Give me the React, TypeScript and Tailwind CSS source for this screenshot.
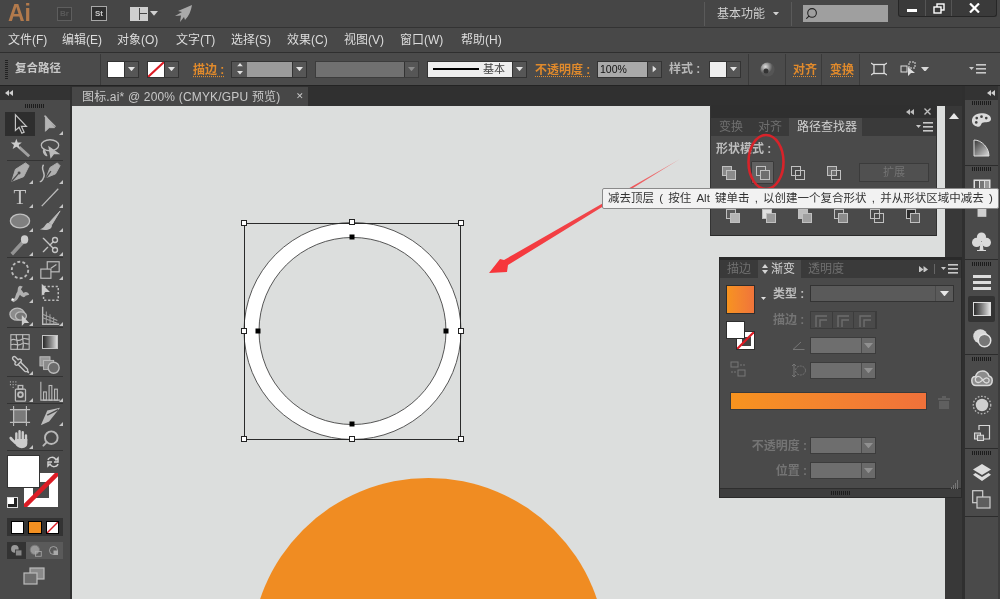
import React from "react";
import { Scissors, Search, Pipette } from "lucide-react";

const CJK = "font-['Liberation_Sans','Noto_Sans_CJK_SC',sans-serif]";
const GRIP = "bg-[repeating-linear-gradient(90deg,#1c1c1c_0_1px,transparent_1px_2px)]";

function Svg({ w = 22, h = 22, vb = "0 0 24 24", children, className = "" }: { w?: number; h?: number; vb?: string; children: React.ReactNode; className?: string }) {
  return (
    <svg width={w} height={h} viewBox={vb} fill="none" stroke="#bcbcbc" strokeWidth={1.4} className={className}>
      {children}
    </svg>
  );
}

const Caret = ({ c = "#e0e0e0", s = 8 }: { c?: string; s?: number }) => (
  <svg width={s} height={s * 0.6} viewBox="0 0 10 6"><path d="M0 0H10L5 6Z" fill={c} /></svg>
);

const Double = ({ right = false, c = "#cfcfcf", s = 8 }: { right?: boolean; c?: string; s?: number }) => (
  <svg width={s} height={(s * 6) / 8} viewBox="0 0 8 6" fill={c} className={right ? "-scale-x-100" : ""}><path d="M4 0V6L0 3Z" /><path d="M8 0V6L4 3Z" /></svg>
);

const MenuLines = () => (
  <svg width="17" height="10" viewBox="0 0 17 10" fill="#c8c8c8"><path d="M0 3H5L2.5 6Z" /><rect x="7" y="0" width="10" height="1.6" /><rect x="7" y="4" width="10" height="1.6" /><rect x="7" y="8" width="10" height="1.6" /></svg>
);

function Slash() {
  return <svg className="absolute inset-0 w-full h-full" viewBox="0 0 20 20" preserveAspectRatio="none"><path d="M0 20L20 0" stroke="#dd1c25" strokeWidth="2.6" /></svg>;
}

/* ------- toolbar icons ------- */
const tools: Record<string, React.ReactNode> = {
  select: <Svg><path d="M7 2V19L11 15.5L14 22L16.5 21L13.5 14.5H19Z" fill="#2c2c2c" stroke="#c4c4c4" strokeWidth="1.3" /></Svg>,
  direct: <Svg><path d="M7 3V20L11 16L17 16Z" fill="#b4b4b4" stroke="#b4b4b4" strokeWidth="1" /><path d="M6 3L18 15" stroke="#b4b4b4" /></Svg>,
  wand: <Svg><path d="M11 11L22 21" strokeWidth="3.2" stroke="#a0a0a0" /><path d="M8 2L9.5 6L14 6L10.6 8.8L12 13L8 10.6L4 13L5.4 8.8L2 6L6.5 6Z" fill="#cccccc" stroke="none" /></Svg>,
  lasso: <Svg><ellipse cx="12" cy="9" rx="9.5" ry="6" /><path d="M6 13C3 16 7 21 9 20M11 11L13 22L16 18L21 18Z" fill="#bcbcbc" /></Svg>,
  pen: <Svg><path d="M22 4L18 1L7 8L3 21L16 16Z" fill="#aeaeae" stroke="#aeaeae" strokeWidth="1" /><path d="M3 21L10 13" stroke="#4a4a4a" /><circle cx="11" cy="12" r="1.6" fill="#4a4a4a" stroke="none" /></Svg>,
  curve: <Svg><path d="M23 4L20 1L12 6L8 17L18 13Z" fill="#aeaeae" stroke="#aeaeae" strokeWidth="1" /><path d="M8 17L13 10" stroke="#4a4a4a" /><path d="M5 3C1 8 8 12 5 17C4 20 2 22 1 21" strokeWidth="1.6" /></Svg>,
  type: <span className="font-['Liberation_Serif',serif] text-[21px] leading-none text-[#c4c4c4]">T</span>,
  line: <Svg><path d="M3 22L21 3" strokeWidth="1.4" stroke="#bcbcbc" /></Svg>,
  ellipse: <Svg><ellipse cx="12" cy="12" rx="10.5" ry="7.5" fill="#808080" stroke="#c0c0c0" /></Svg>,
  brush: <Svg><path d="M23 1L11 14L14 16Z" fill="#bcbcbc" stroke="#bcbcbc" strokeWidth="1" /><path d="M10 14C6 15 8 19 1 21C8 23 15 21 14 16Z" fill="#bcbcbc" stroke="none" /></Svg>,
  blob: <Svg><path d="M15 9L5 20L3 22" strokeWidth="4" stroke="#949494" /><ellipse cx="17" cy="6" rx="4" ry="4.6" fill="#cccccc" stroke="none" /></Svg>,
  scissors: <Scissors size={20} color="#c4c4c4" strokeWidth={1.6} className="-scale-x-100" />,
  rotate: <Svg><circle cx="12" cy="12" r="9" strokeDasharray="3.2 2.4" strokeWidth="2" /></Svg>,
  scale: <Svg><rect x="9" y="3" width="13" height="11" strokeWidth="1.3" /><rect x="2" y="11" width="11" height="10" strokeWidth="1.3" fill="#4a4a4a" /><path d="M13 10L19 6" strokeWidth="1.3" /></Svg>,
  warp: <Svg><path d="M2 20C8 19 6 15 9 11C10 8 9 5 12 4L15 5L13 8L16 12C18 10 21 11 22 14L18 15C17 18 13 16 12 14C10 17 10 20 5 22Z" fill="#b0b0b0" stroke="none" /><circle cx="4" cy="19" r="1.3" fill="#fff" stroke="none" /></Svg>,
  free: <Svg><rect x="5" y="5" width="16" height="15" strokeDasharray="2.4 2" strokeWidth="1.6" /><path d="M3 2V15L7 11L12 11Z" fill="#cccccc" stroke="none" /></Svg>,
  builder: <Svg><ellipse cx="9" cy="10" rx="8" ry="6.5" fill="#8c8c8c" /><ellipse cx="13" cy="12" rx="6" ry="4.6" fill="#777" /><path d="M14 11V23L17 19.5L22 19.5Z" fill="#cccccc" stroke="none" /></Svg>,
  persp: <Svg><path d="M4 2V21H22" strokeWidth="1.5" /><path d="M8 7V21M12 10V21M16 13V21M4 10L20 17M4 14L20 20" strokeWidth="1.1" stroke="#a0a0a0" /></Svg>,
  mesh: <Svg><rect x="2" y="4" width="20" height="16" strokeWidth="1.2" /><path d="M2 10C7 7 9 13 14 9C17 7 19 9 22 9M2 15C7 13 10 17 14 14C17 12 20 15 22 14M8 4C7 9 11 12 9 20M15 4C14 9 17 14 15 20" strokeWidth="1.3" /></Svg>,
  gradient: <div className="w-[16px] h-[14px] border border-[#c4c4c4] bg-gradient-to-r from-[#2a2a2a] to-[#dddddd]" />,
  drop: <Pipette size={19} color="#c4c4c4" strokeWidth={1.8} className="-scale-x-100" />,
  blend: <Svg><rect x="1" y="3" width="11" height="10" fill="#999" strokeWidth="1" /><rect x="5" y="7" width="11" height="10" fill="#8a8a8a" strokeWidth="1" /><circle cx="16" cy="15" r="6" fill="#6c6c6c" strokeWidth="1.5" /></Svg>,
  spray: <Svg><rect x="7" y="10" width="11" height="13" rx="1" /><rect x="10" y="6" width="5" height="4" /><circle cx="12.5" cy="16" r="2.6" strokeWidth="2" /><path d="M1 2H2M4 2H5M7 2H8M1 5H2M4 5H5M7 5H8M4 8H5" strokeWidth="1.5" /></Svg>,
  chart: <Svg><path d="M2 2V22H23" strokeWidth="1.2" /><rect x="5" y="13" width="3" height="9" strokeWidth="1.2" /><rect x="11" y="6" width="3" height="16" strokeWidth="1.2" /><rect x="17" y="10" width="3" height="12" strokeWidth="1.2" /></Svg>,
  artboard: <Svg><rect x="5" y="5" width="14" height="14" fill="#7a7a7a" strokeWidth="1.2" /><path d="M1 5H23M1 19H23M5 1V23M19 1V23" strokeWidth="1.2" /></Svg>,
  slice: <Svg><path d="M23 3L9 6L2 22L11 18Z" fill="#bcbcbc" stroke="none" /><path d="M9 11L21 5" stroke="#4a4a4a" strokeWidth="1.5" /></Svg>,
  hand: (
    <Svg w={22} h={22}>
      <path d="M7 16C5 14 3 13 2 11" stroke="#cccccc" strokeWidth="3" strokeLinecap="round" />
      <path d="M8 14V6M11.5 13V3.5M15 13V4.5M18.5 14V8" stroke="#cccccc" strokeWidth="2.6" strokeLinecap="round" />
      <path d="M6.5 12H20V17C20 20 18 22 14 22C10 22 8 20 6.5 17Z" fill="#cccccc" stroke="none" />
    </Svg>
  ),
  zoom: <Search size={19} color="#b8b8b8" strokeWidth={2.4} className="-scale-x-100" />,
};

function Tool({ k, tri = true, active = false, h = "h-[24px]" }: { k: string; tri?: boolean; active?: boolean; h?: string }) {
  return (
    <div className={`relative w-[30px] ${h} flex items-center justify-center ${active ? "bg-[#2e2e2e]" : ""}`}>
      {tools[k]}
      {tri && <span className="absolute right-[2px] bottom-[1px] w-0 h-0 border-l-[4px] border-l-transparent border-b-[4px] border-b-[#c4c4c4]" />}
    </div>
  );
}

const ToolRow = ({ a, b, triA = true, triB = true, h, active }: { a: string; b: string; triA?: boolean; triB?: boolean; h?: string; active?: boolean }) => (
  <div className="flex pl-[5px]"><Tool k={a} tri={triA} h={h} active={active} /><Tool k={b} tri={triB} h={h} /></div>
);

const Sep = () => <div className="mx-[7px] h-px bg-[#333333]" />;

function Toolbar() {
  return (
    <div className="w-[72px] shrink-0 flex flex-col bg-[#4a4a4a] border-r-[2px] border-r-[#2f2f2f] h-full">
      <div className="h-[14px] bg-[#333333] flex items-center pl-[5px]"><Double /></div>
      <div className="h-[12px] flex items-center justify-center">
        <div className={`w-[20px] h-[4px] ${GRIP}`} />
      </div>
      <ToolRow a="select" b="direct" triA={false} active />
      <ToolRow a="wand" b="lasso" triA={false} triB={false} />
      <Sep />
      <ToolRow a="pen" b="curve" />
      <ToolRow a="type" b="line" />
      <ToolRow a="ellipse" b="brush" />
      <ToolRow a="blob" b="scissors" />
      <Sep />
      <ToolRow a="rotate" b="scale" h="h-[23px]" />
      <ToolRow a="warp" b="free" triB={false} h="h-[23px]" />
      <ToolRow a="builder" b="persp" h="h-[23px]" />
      <Sep />
      <div className="h-[2px]" />
      <ToolRow a="mesh" b="gradient" triA={false} triB={false} h="h-[23px]" />
      <ToolRow a="drop" b="blend" triB={false} h="h-[23px]" />
      <Sep />
      <div className="h-[2px]" />
      <ToolRow a="spray" b="chart" />
      <Sep />
      <ToolRow a="artboard" b="slice" triA={false} h="h-[23px]" />
      <ToolRow a="hand" b="zoom" triB={false} h="h-[23px]" />
      <Sep />

      {/* fill & stroke */}
      <div className="relative h-[60px] mt-[4px]">
        <div className="absolute left-[24px] top-[18px] w-[34px] h-[34px] bg-white flex items-center justify-center overflow-hidden">
          <div className="w-[16px] h-[16px] bg-[#4a4a4a]" />
          <Slash />
        </div>
        <div className="absolute left-[7px] top-0 w-[33px] h-[33px] bg-white border border-[#333]" />
        <svg className="absolute left-[46px] top-[0px]" width="14" height="14" viewBox="0 0 14 14" fill="none" stroke="#cfcfcf" strokeWidth="1.5"><path d="M2 5C3 2 8 1 10 5L12 3V7H8M12 9C11 12 6 13 4 9L2 11V7H6" /></svg>
        <div className="absolute left-[7px] top-[42px] w-[11px] h-[11px] border border-[#ddd] bg-[#222]"><div className="w-[6px] h-[6px] bg-white" /></div>
      </div>

      <div className="mx-[7px] h-[18px] mt-[3px] bg-[#333333] flex items-center justify-between px-[4px]">
        <div className="w-[13px] h-[13px] bg-white border border-black" />
        <div className="w-[14px] h-[13px] bg-[#f39021] border border-black" />
        <div className="relative w-[13px] h-[13px] bg-white border border-black"><Slash /></div>
      </div>
      <div className="mx-[7px] h-[17px] mt-[6px] flex">
        <div className="w-[19px] bg-[#333] flex items-center justify-center"><Svg w={13} h={13}><circle cx="9" cy="9" r="7" fill="#999" stroke="none" /><rect x="10" y="11" width="12" height="11" fill="#888" stroke="#333" /></Svg></div>
        <div className="flex-1 bg-[#5a5a5a] flex items-center justify-around"><Svg w={14} h={14}><circle cx="10" cy="10" r="8" fill="#999" stroke="#777" /><rect x="11" y="13" width="10" height="8" stroke="#aaa" /></Svg><Svg w={12} h={12}><circle cx="11" cy="11" r="8" /><rect x="11" y="11" width="9" height="9" fill="#aaa" stroke="none" /></Svg></div>
      </div>
      <div className="flex justify-center mt-[8px] pr-[3px]">
        <Svg w={22} h={18} vb="0 0 22 18"><rect x="7" y="1" width="14" height="11" fill="#8a8a8a" strokeWidth="1.2" /><rect x="1" y="6" width="13" height="11" fill="#6e6e6e" strokeWidth="1.2" /></Svg>
      </div>
    </div>
  );
}

/* ------- dock ------- */
const DockGrip = ({ h = "h-[8px]" }: { h?: string }) => <div className={`${h} flex items-center justify-center`}><div className={`w-[20px] h-[4px] ${GRIP}`} /></div>;
const DockSep = () => <div className="h-px bg-[#2c2c2c]" />;
const DockItem = ({ h, children, active }: { h: string; children: React.ReactNode; active?: boolean }) => (
  <div className={`${h} flex items-center justify-center`}>
    {active ? <div className="w-[27px] h-[26px] rounded-[2px] bg-[#333333] flex items-center justify-center">{children}</div> : children}
  </div>
);

function Dock() {
  return (
    <div className="w-[38px] shrink-0 h-full flex flex-col bg-[#4a4a4a] border-l-[3px] border-l-[#2f2f2f] border-r-[2px] border-r-[#3c3c3c]">
      <div className="h-[14px] bg-[#333333] flex items-center justify-end pr-[3px]"><Double /></div>
      <DockGrip h="h-[6px]" />
      <DockItem h="h-[28px]">
        <Svg w={21} h={16} vb="0 0 22 16"><path d="M11 1C4 1 1 5 1 9C1 13 5 15 8 15C11 15 10 12 12 11C15 10 21 11 21 7C21 3 16 1 11 1Z" fill="#dadada" stroke="none" /><circle cx="6" cy="6" r="1.4" fill="#444" stroke="none" /><circle cx="11" cy="4.5" r="1.4" fill="#444" stroke="none" /><circle cx="16" cy="6" r="1.4" fill="#444" stroke="none" /><circle cx="5.5" cy="10.5" r="1.4" fill="#444" stroke="none" /></Svg>
      </DockItem>
      <DockItem h="h-[28px]">
        <svg width="17" height="18" viewBox="0 0 17 18"><defs><linearGradient id="qg" x1="0" y1="0" x2="1" y2="1"><stop offset="0" stopColor="#333" /><stop offset="1" stopColor="#ddd" /></linearGradient></defs><path d="M1 1C9 1 16 9 16 17H1Z" fill="url(#qg)" stroke="#ddd" /></svg>
      </DockItem>
      <div className="h-[3px]" />
      <DockSep />
      <DockGrip h="h-[6px]" />
      <DockItem h="h-[26px]">
        <svg width="18" height="12" viewBox="0 0 18 12"><rect x=".5" y=".5" width="17" height="11" fill="#ddd" /><rect x="2" y="2" width="4" height="8" fill="#555" /><rect x="7" y="2" width="4" height="8" fill="#777" /><rect x="12" y="2" width="4" height="8" fill="#999" /></svg>
      </DockItem>
      <DockItem h="h-[20px]">
        <Svg w={15} h={18} vb="0 0 17 20"><rect x="4" y="10" width="10" height="10" fill="#cfcfcf" stroke="none" /><path d="M6 10L2 1M8.5 10V3M11 10L15 1" stroke="#d8d8d8" strokeWidth="2.4" /></Svg>
      </DockItem>
      <div className="h-[6px]" />
      <DockItem h="h-[35px]">
        <svg width="19" height="19" viewBox="0 0 19 19" fill="#dadada"><circle cx="9.5" cy="5" r="4.6" /><circle cx="4.6" cy="10.4" r="4.6" /><circle cx="14.4" cy="10.4" r="4.6" /><path d="M8.5 10H10.5L11.5 18H14V19H5V18H7.5Z" /></svg>
      </DockItem>
      <DockSep />
      <DockGrip />
      <DockItem h="h-[28px]">
        <div className="w-[18px] flex flex-col gap-[3px]"><div className="h-[3px] bg-[#dddddd]" /><div className="h-[3px] bg-[#dddddd]" /><div className="h-[3px] bg-[#dddddd]" /></div>
      </DockItem>
      <DockItem h="h-[26px]" active><div className="w-[18px] h-[14px] border border-[#ddd] bg-gradient-to-r from-[#2b2b2b] to-[#e4e4e4]" /></DockItem>
      <DockItem h="h-[32px]">
        <Svg w={20} h={20}><circle cx="10" cy="10" r="8.5" fill="#d8d8d8" stroke="none" /><circle cx="15" cy="15" r="7.5" fill="#777" stroke="#e4e4e4" strokeWidth="1.8" /></Svg>
      </DockItem>
      <DockSep />
      <DockGrip />
      <DockItem h="h-[30px]">
        <Svg w={22} h={17} vb="0 0 22 17">
          <path d="M5 15.5C2 15.5 .8 13 .8 10.5C.8 8 2.5 6.5 4.5 6.5C5.5 3 8.5 1 11.5 1C15 1 17 3 18 6C20 6.5 21.2 8.5 21.2 10.5C21.2 13.5 19.5 15.5 16.5 15.5Z" fill="#8c8c8c" stroke="#dadada" strokeWidth="1.5" />
          <path d="M11 9C9.5 7 8 6 6.5 6.5C4.5 7 4 9 4.5 10.5C5 12.5 7.5 13 9 12L14 8.5C15.5 7.5 17.5 8 18 9.5C18.5 11 17.5 13 15.5 13C13.5 13 12.5 11 11 9Z" stroke="#dadada" strokeWidth="1.3" />
        </Svg>
      </DockItem>
      <DockItem h="h-[24px]">
        <Svg w={20} h={20}><circle cx="12" cy="12" r="7.5" fill="#d0d0d0" stroke="none" /><circle cx="12" cy="12" r="10.5" strokeDasharray="2 2" strokeWidth="1.5" /></Svg>
      </DockItem>
      <DockItem h="h-[31px]">
        <Svg w={18} h={18}><path d="M8 8V2H22V20H14" strokeWidth="1.6" stroke="#d8d8d8" /><rect x="2" y="12" width="8" height="8" fill="#777" stroke="#d8d8d8" /><rect x="6" y="15" width="8" height="7" fill="#777" stroke="#d8d8d8" /></Svg>
      </DockItem>
      <DockSep />
      <DockGrip />
      <DockItem h="h-[30px]">
        <svg width="18" height="17" viewBox="0 0 18 17" fill="#dddddd"><path d="M9 0L18 5.5L9 11L0 5.5Z" /><path d="M2.4 9L9 13L15.6 9L18 10.8L9 17L0 10.8Z" /></svg>
      </DockItem>
      <DockItem h="h-[24px]">
        <Svg w={19} h={19} vb="0 0 19 19"><rect x=".7" y=".7" width="10" height="12" stroke="#cfcfcf" strokeWidth="1.2" /><rect x="5" y="7" width="13" height="11" fill="#5e5e5e" stroke="#cfcfcf" strokeWidth="1.2" /></Svg>
      </DockItem>
      <div className="h-[5px]" />
      <DockSep />
    </div>
  );
}

/* ------- top ------- */
function TitleBar() {
  return (
    <div className={`h-[28px] shrink-0 flex items-center bg-[#464646] border-b border-b-[#333333] ${CJK} relative`}>
      <span className="ml-[8px] w-[49px] font-['Liberation_Sans',sans-serif] font-bold text-[23px] leading-none text-[#b27a4c]">Ai</span>
      <div className="w-[15px] h-[14px] border border-[#5e5e5e] bg-[#3d3d3d] flex items-center justify-center text-[8px] font-bold text-[#5a5a5a] leading-none">Br</div>
      <div className="ml-[19px] w-[16px] h-[15px] border border-[#a8a8a8] bg-[#2f2f2f] flex items-center justify-center text-[8px] font-bold text-[#c8c8c8] leading-none">St</div>
      <div className="ml-[23px] w-[18px] h-[14px] border border-[#cfcfcf] flex gap-[1px] bg-[#474747]"><div className="w-[8px] bg-[#cfcfcf]" /><div className="flex-1 flex flex-col gap-[1px]"><div className="flex-1 bg-[#cfcfcf]" /><div className="flex-1 bg-[#cfcfcf]" /></div></div>
      <div className="ml-[2px]"><Caret c="#d0d0d0" /></div>
      <svg className="ml-[16px]" width="18" height="18" viewBox="0 0 18 18" fill="#a9a9a9"><path d="M18 0L4 6L8 7L1 11L7 10.5L6 17L10 12L11 15C15 11 17 6 18 0Z" /></svg>
      <div className="ml-[512px] h-[24px] w-px bg-[#5a5a5a]" />
      <span className="ml-[12px] text-[12px] text-[#cfcfcf] w-[49px] whitespace-nowrap">基本功能</span>
      <div className="ml-[7px]"><Caret c="#d0d0d0" s={6} /></div>
      <div className="ml-[12px] h-[24px] w-px bg-[#5a5a5a]" />
      <div className="ml-[11px] w-[85px] h-[17px] bg-[#9f9f9f] flex items-center pl-[2px]">
        <Search size={13} color="#222" strokeWidth={2} className="-scale-x-100" />
      </div>
      <div className="ml-[10px] self-start w-[99px] h-[17px] rounded-b-[3px] bg-[#3a3a3a] border border-[#262626] border-t-0 flex text-white">
        <div className="w-[27px] flex items-center justify-center border-r border-r-[#555]"><div className="w-[10px] h-[2.5px] bg-white mt-[5px]" /></div>
        <div className="w-[26px] flex items-center justify-center border-r border-r-[#555]"><svg width="12" height="11" viewBox="0 0 12 11" fill="none" stroke="#fff" strokeWidth="1.4"><rect x="4" y="1" width="7" height="6" /><rect x="1" y="4" width="7" height="6" fill="#3a3a3a" /></svg></div>
        <div className="flex-1 flex items-center justify-center"><svg width="11" height="10" viewBox="0 0 11 10" stroke="#fff" strokeWidth="2.2"><path d="M1 0.5L10 9.5M10 0.5L1 9.5" /></svg></div>
      </div>
    </div>
  );
}

function MenuBar() {
  const items = ["文件(F)", "编辑(E)", "对象(O)", "文字(T)", "选择(S)", "效果(C)", "视图(V)", "窗口(W)", "帮助(H)"];
  const widths = ["w-[54px]", "w-[55px]", "w-[59px]", "w-[55px]", "w-[56px]", "w-[57px]", "w-[56px]", "w-[61px]", "w-[50px]"];
  return (
    <div className={`h-[25px] shrink-0 flex items-center pl-[8px] bg-[#484848] border-b border-b-[#2f2f2f] ${CJK} text-[12px] text-[#dcdcdc]`}>
      {items.map((t, i) => <span key={t} className={`${widths[i]} whitespace-nowrap`}>{t}</span>)}
    </div>
  );
}

const DropBtn = ({ w = "w-[14px]", dim = false }: { w?: string; dim?: boolean }) => (
  <div className={`${w} h-full bg-[#565656] border-l border-l-[#333] flex items-center justify-center`}><Caret c={dim ? "#8a8a8a" : "#e4e4e4"} s={7} /></div>
);
const VSep = ({ ml = "" }: { ml?: string }) => <div className={`${ml} h-[31px] w-px bg-[#3a3a3a]`} />;
const Orange = ({ children, ml, w }: { children: string; ml: string; w: string }) => (
  <div className={`${ml} ${w} shrink-0`}>
    <span className="text-[12px] font-bold text-[#e08a2c] underline decoration-dotted decoration-[#e08a2c] underline-offset-2 whitespace-nowrap">{children}</span>
  </div>
);

function ControlBar() {
  return (
    <div className={`h-[32px] shrink-0 flex items-center bg-[#4b4b4b] ${CJK}`}>
      <div className="ml-[5px] w-[3px] h-[20px] bg-[repeating-linear-gradient(0deg,#222_0_1px,transparent_1px_2px)]" />
      <span className="ml-[7px] w-[85px] text-[11.5px] font-bold text-[#c8c8c8]">复合路径</span>
      <VSep />
      <div className="ml-[6px] h-[17px] flex border border-[#333]"><div className="w-[16px] bg-white" /><DropBtn /></div>
      <div className="ml-[8px] h-[17px] flex border border-[#333]"><div className="relative w-[16px] bg-white"><Slash /></div><DropBtn /></div>
      <Orange ml="ml-[14px]" w="w-[38px]">描边 :</Orange>
      <div className="h-[17px] flex border border-[#333]">
        <div className="w-[15px] bg-[#565656] flex flex-col items-center justify-around"><div className="rotate-180"><Caret s={6} /></div><Caret s={6} /></div>
        <div className="w-[45px] bg-[#9b9b9b]" />
        <DropBtn />
      </div>
      <div className="ml-[8px] h-[17px] w-[104px] flex border border-[#3c3c3c] bg-[#707070]"><div className="flex-1" /><DropBtn dim /></div>
      <div className="ml-[8px] h-[17px] w-[100px] flex border border-[#333] bg-[#eeeeee] items-center">
        <div className="ml-[5px] w-[46px] h-[2px] bg-black" />
        <span className="ml-[4px] flex-1 text-[11px] text-[#444] whitespace-nowrap">基本</span>
        <DropBtn />
      </div>
      <Orange ml="ml-[8px]" w="w-[62px]">不透明度 :</Orange>
      <div className="h-[17px] flex border border-[#333]">
        <div className="w-[49px] bg-[#a9a9a9] text-[10.5px] leading-[15px] pl-[2px] text-[#111]">100%</div>
        <div className="w-[14px] bg-[#565656] flex items-center justify-center border-l border-l-[#333]"><div className="-rotate-90"><Caret s={7} /></div></div>
      </div>
      <span className="ml-[7px] w-[40px] text-[12px] font-bold text-[#b8b8b8] whitespace-nowrap">样式 :</span>
      <div className="h-[17px] flex border border-[#333]"><div className="w-[16px] bg-[#eeeeee]" /><DropBtn /></div>
      <VSep ml="ml-[7px]" />
      <svg className="ml-[11px]" width="15" height="15" viewBox="0 0 15 15"><defs><radialGradient id="gl" cx=".35" cy=".3"><stop offset="0" stopColor="#ddd" /><stop offset="1" stopColor="#555" /></radialGradient></defs><circle cx="7.5" cy="7.5" r="7" fill="url(#gl)" /><circle cx="6" cy="9" r="2.5" fill="#333" /></svg>
      <VSep ml="ml-[10px]" />
      <Orange ml="ml-[7px]" w="w-[24px]">对齐</Orange>
      <VSep ml="ml-[4px]" />
      <Orange ml="ml-[8px]" w="w-[24px]">变换</Orange>
      <VSep ml="ml-[5px]" />
      <svg className="ml-[11px]" width="16" height="14" viewBox="0 0 16 14" fill="none" stroke="#ddd" strokeWidth="1.3"><rect x="3" y="2.5" width="10" height="9" /><path d="M0 1L3 3M16 1L13 3M0 13L3 11M16 13L13 11" /></svg>
      <svg className="ml-[13px]" width="18" height="16" viewBox="0 0 18 16" fill="none" stroke="#ddd" strokeWidth="1"><rect x="1" y="5" width="6" height="6" /><rect x="9" y="1" width="6" height="6" strokeDasharray="2 1" /><path d="M8 6V15L11 12H15Z" fill="#ddd" stroke="none" /></svg>
      <div className="ml-[3px]"><Caret c="#d8d8d8" /></div>
      <div className="ml-[40px]"><MenuLines /></div>
    </div>
  );
}

/* ------- pathfinder ------- */
function Bool({ v }: { v: number }) {
  const fills = [["#8a8a8a", "#8a8a8a"], ["none", "#6e6e6e"], ["none", "none"], ["#6c6c6c", "none"], ["#5c5c5c", "#b5b5b5"], ["#e0e0e0", "#9a9a9a"], ["#bdbdbd", "#a0a0a0"], ["#505050", "#8c8c8c"], ["none", "none"], ["#2c2c2c", "#666"]][v];
  return (
    <svg width="15" height="15" viewBox="0 0 15 15">
      <rect x="1.5" y="1.5" width="9" height="9" fill={fills[0]} stroke="#c0c0c0" />
      <rect x="5.5" y="5.5" width="9" height="9" fill={fills[1]} stroke="#c0c0c0" />
    </svg>
  );
}

function Pathfinder() {
  return (
    <div className={`absolute left-[710px] top-[105px] w-[227px] h-[131px] bg-[#4a4a4a] border-b border-b-[#2a2a2a] border-r border-r-[#333] border-l border-l-[#333] ${CJK}`}>
      <div className="h-[13px] bg-[#2f2f2f] flex items-center justify-end gap-[10px] pr-[5px]"><Double c="#bdbdbd" /><svg width="7" height="7" viewBox="0 0 7 7" stroke="#bdbdbd" strokeWidth="1.4"><path d="M.5 .5L6.5 6.5M6.5 .5L.5 6.5" /></svg></div>
      <div className="h-[18px] bg-[#3a3a3a] flex items-center text-[12px]">
        <span className="ml-[8px] w-[39px] text-[#6f6f6f]">变换</span>
        <span className="w-[31px] text-[#6f6f6f]">对齐</span>
        <span className="h-full w-[73px] pl-[8px] bg-[#4a4a4a] leading-[18px] text-[#d0d0d0] whitespace-nowrap">路径查找器</span>
        <div className="ml-auto mr-[3px]"><MenuLines /></div>
      </div>
      <div className="ml-[5px] mt-[4px] text-[12px] font-bold text-[#bdbdbd] leading-[18px]">形状模式 :</div>
      <div className="flex items-center mt-[2px] h-[24px] ml-[9px]">
        <div className="w-[16px] flex justify-center"><Bool v={0} /></div>
        <div className="ml-[15px] w-[23px] h-[23px] rounded-[1px] bg-[#616161] border border-[#3a3a3a] flex items-center justify-center"><Bool v={1} /></div>
        <div className="ml-[16px]"><Bool v={2} /></div>
        <div className="ml-[21px]"><Bool v={3} /></div>
        <div className="ml-[18px] w-[70px] h-[19px] border border-[#3b3b3b] bg-[#505050] text-center text-[11px] leading-[17px] text-[#747474]">扩展</div>
      </div>
      <div className="h-[24px]" />
      <div className="flex items-center ml-[14px] gap-[21px]">
        {[4, 5, 6, 7, 8, 9].map(v => <Bool key={v} v={v} />)}
      </div>
    </div>
  );
}

/* ------- gradient panel ------- */
function Field({ w = "w-[66px]" }: { w?: string }) {
  return (
    <div className={`${w} h-[17px] flex bg-[#6e6e6e] border border-[#3c3c3c]`}>
      <div className="flex-1" />
      <div className="w-[14px] bg-[#6a6a6a] border-l border-l-[#4c4c4c] flex items-center justify-center"><Caret c="#909090" s={9} /></div>
    </div>
  );
}

function GradientPanel() {
  return (
    <div className={`absolute left-[719px] top-[257px] w-[243px] h-[241px] bg-[#4a4a4a] border border-[#2a2a2a] border-t-[3px] flex flex-col ${CJK}`}>
      <div className="h-[18px] bg-[#3a3a3a] flex items-center text-[12px] shrink-0">
        <span className="ml-[7px] w-[31px] text-[#6f6f6f]">描边</span>
        <div className="w-[43px] h-full bg-[#4a4a4a] flex items-center pl-[4px] text-[#d4d4d4] whitespace-nowrap">
          <svg className="mr-[3px]" width="6" height="10" viewBox="0 0 6 10" fill="#d4d4d4"><path d="M3 0L6 4H0Z" /><path d="M3 10L6 6H0Z" /></svg>渐变
        </div>
        <span className="ml-[7px] w-[40px] text-[#6f6f6f] whitespace-nowrap">透明度</span>
        <div className="ml-auto"><Double right c="#c8c8c8" s={9} /></div>
        <div className="ml-[6px] w-px h-[10px] bg-[#666]" />
        <div className="ml-[6px] mr-[3px]"><MenuLines /></div>
      </div>
      <div className="flex mt-[7px] h-[96px]">
        <div className="w-[53px] pl-[6px] shrink-0 relative">
          <div className="w-[29px] h-[29px] bg-gradient-to-r from-[#f7931e] to-[#f0743a] border border-[#2e2e2e]" />
          <div className="absolute left-[41px] top-[12px]"><Caret s={5} /></div>
          <div className="relative h-[28px] mt-[7px]">
            <div className="absolute left-[10px] top-[10px] w-[19px] h-[19px] bg-white border border-[#2e2e2e] overflow-hidden"><div className="w-[9px] h-[9px] ml-[5px] mt-[5px] bg-[#444]" /><Slash /></div>
            <div className="absolute left-0 top-0 w-[19px] h-[18px] bg-white border border-[#2e2e2e]" />
          </div>
          <Svg w={18} h={16} vb="0 0 18 16" className="ml-[4px] mt-[12px]"><rect x="1" y="1" width="7" height="5" stroke="#777" strokeWidth="1" /><rect x="8" y="9" width="7" height="6" stroke="#777" strokeWidth="1" /><path d="M1 11H6M10 4H16" stroke="#777" strokeWidth="1" strokeDasharray="2 1" /></Svg>
        </div>
        <div className="flex-1 flex flex-col">
          <div className="flex items-center h-[17px]">
            <span className="w-[37px] text-[12px] font-bold text-[#bdbdbd] whitespace-nowrap">类型 :</span>
            <div className="w-[144px] h-[17px] flex bg-[#5a5a5a] border border-[#333]"><div className="flex-1" /><div className="w-[18px] border-l border-l-[#4a4a4a] flex items-center justify-center"><Caret c="#e8e8e8" s={9} /></div></div>
          </div>
          <div className="flex items-center h-[18px] mt-[9px]">
            <span className="w-[37px] text-[12px] font-bold text-[#747474] whitespace-nowrap">描边 :</span>
            <div className="w-[67px] h-[18px] flex border border-[#3c3c3c]">
              {["a", "b", "c"].map(k => (
                <div key={k} className="flex-1 border-r border-r-[#3c3c3c] flex items-center justify-center">
                  <svg width="14" height="13" viewBox="0 0 14 13" fill="none" stroke="#6e6e6e" strokeWidth="1.4"><path d="M2 13V2H13M6 13V6H13" /></svg>
                </div>
              ))}
            </div>
          </div>
          <div className="flex items-center h-[17px] mt-[8px]">
            <div className="w-[37px] pl-[19px]"><svg width="13" height="9" viewBox="0 0 13 9" fill="none" stroke="#767676"><path d="M1 8.5H12.5M1 8.5L9 1" /></svg></div>
            <Field />
          </div>
          <div className="flex items-center h-[17px] mt-[8px]">
            <div className="w-[37px] pl-[19px]"><svg width="14" height="15" viewBox="0 0 14 15" fill="none" stroke="#767676"><ellipse cx="8.5" cy="7.5" rx="5" ry="4.5" strokeDasharray="2 1" /><path d="M2 1V14M0 3L2 1L4 3M0 12L2 14L4 12" /></svg></div>
            <Field />
          </div>
        </div>
      </div>
      <div className="flex items-center mt-[11px] ml-[10px]">
        <div className="w-[197px] h-[18px] bg-gradient-to-r from-[#f7931e] to-[#f0713a] border border-[#3a3a3a]" />
        <svg className="ml-[11px] mt-[2px]" width="12" height="13" viewBox="0 0 12 13" fill="#5f5f5f"><rect x="0" y="2" width="12" height="2" /><rect x="4" y="0" width="4" height="2" /><path d="M1 5H11V13H1Z" /></svg>
      </div>
      <div className="h-[27px]" />
      <div className="flex items-center h-[17px]">
        <span className="w-[87px] mr-[3px] text-right text-[12px] font-bold text-[#747474] whitespace-nowrap">不透明度 :</span>
        <Field />
      </div>
      <div className="flex items-center h-[17px] mt-[8px]">
        <span className="w-[87px] mr-[3px] text-right text-[12px] font-bold text-[#747474] whitespace-nowrap">位置 :</span>
        <Field />
      </div>
      <div className="mt-auto h-[9px] bg-[#3d3d3d] border-t border-t-[#2e2e2e] flex items-center justify-center relative">
        <div className={`w-[20px] h-[4px] ${GRIP}`} />
        <svg className="absolute right-[2px] bottom-[8px]" width="9" height="9" viewBox="0 0 9 9" fill="#777"><rect x="7" y="0" width="1" height="9" /><rect x="5" y="3" width="1" height="6" /><rect x="3" y="5" width="1" height="4" /><rect x="1" y="7" width="1" height="2" /></svg>
      </div>
    </div>
  );
}

/* ------- artwork ------- */
function Artwork() {
  const box = [[244, 223], [352, 222], [461, 223], [244, 331], [461, 331], [244, 439], [352, 439], [461, 439]];
  const anchors = [[352, 237], [352, 424], [258, 331], [446, 331]];
  return (
    <svg className="absolute left-0 top-0" width="1000" height="599" viewBox="0 0 1000 599">
      <defs>
        <linearGradient id="arrowFade" x1="680" y1="159" x2="489" y2="273" gradientUnits="userSpaceOnUse">
          <stop offset="0" stopColor="#ea8a8a" />
          <stop offset="0.3" stopColor="#ee4a4e" />
          <stop offset="1" stopColor="#f7353a" />
        </linearGradient>
      </defs>
      <circle cx="428.5" cy="655.5" r="177.6" fill="#f08c22" />
      <path fillRule="evenodd" clipRule="evenodd" d="M244 331a108.5 108.5 0 1 0 217 0a108.5 108.5 0 1 0 -217 0ZM259 331a93.5 93.5 0 1 1 187 0a93.5 93.5 0 1 1 -187 0Z" fill="#ffffff" stroke="#444" strokeWidth="0.9" />
      <rect x="244.5" y="223.5" width="216" height="216" fill="none" stroke="#2a2a2a" strokeWidth="1" />
      {box.map(([x, y]) => <rect key={`${x}-${y}`} x={x - 2.5} y={y - 2.5} width="5" height="5" fill="#ffffff" stroke="#222" strokeWidth="1" />)}
      {anchors.map(([x, y]) => <rect key={`${x}-${y}`} x={x - 2.5} y={y - 2.5} width="5" height="5" fill="#000" />)}
      <path d="M680 159L504 260L500 259L489 273L507 272L508 265Z" fill="url(#arrowFade)" />
    </svg>
  );
}

export default function App() {
  return (
    <div className={`relative w-[1000px] h-[599px] overflow-hidden flex flex-col bg-[#4a4a4a] blur-[0.4px] ${CJK}`}>
      <TitleBar />
      <MenuBar />
      <ControlBar />
      <div className="h-[1px] shrink-0 bg-[#232323]" />
      <div className="flex-1 flex min-h-0">
        <Toolbar />
        <div className="flex-1 flex flex-col min-w-0">
          <div className="h-[20px] shrink-0 bg-[#303030] flex">
            <div className="w-[236px] mt-[1px] bg-[#474747] flex items-center pl-[10px] text-[12px] tracking-[0.18px] text-[#c8c8c8] whitespace-nowrap">
              <span className="w-[200px]">图标.ai* @ 200% (CMYK/GPU 预览)</span>
              <span className="ml-[14px] text-[9px] leading-none">✕</span>
            </div>
          </div>
          <div className="flex-1 flex min-h-0">
            <div className="flex-1 bg-[#dcdedd]" />
            <div className="w-[17px] bg-[#383838] flex justify-center pt-[7px]"><div className="rotate-180 h-fit"><Caret c="#e8e8e8" s={10} /></div></div>
          </div>
        </div>
        <Dock />
      </div>

      <Artwork />
      <Pathfinder />
      <GradientPanel />
      <svg className="absolute left-[746px] top-[130px]" width="40" height="65" viewBox="0 0 40 65"><ellipse cx="20" cy="32" rx="17.5" ry="27" fill="none" stroke="#d8232a" strokeWidth="2.6" /></svg>
      <div className="absolute left-[602px] top-[188px] w-[397px] h-[21px] bg-[#f2f2f2] border border-[#8a8a8a] rounded-[2px] pl-[5px] text-[11.5px] leading-[19px] text-[#333] [word-spacing:2px] whitespace-nowrap overflow-hidden">减去顶层 ( 按住 Alt 键单击 , 以创建一个复合形状 , 并从形状区域中减去 )</div>
    </div>
  );
}
